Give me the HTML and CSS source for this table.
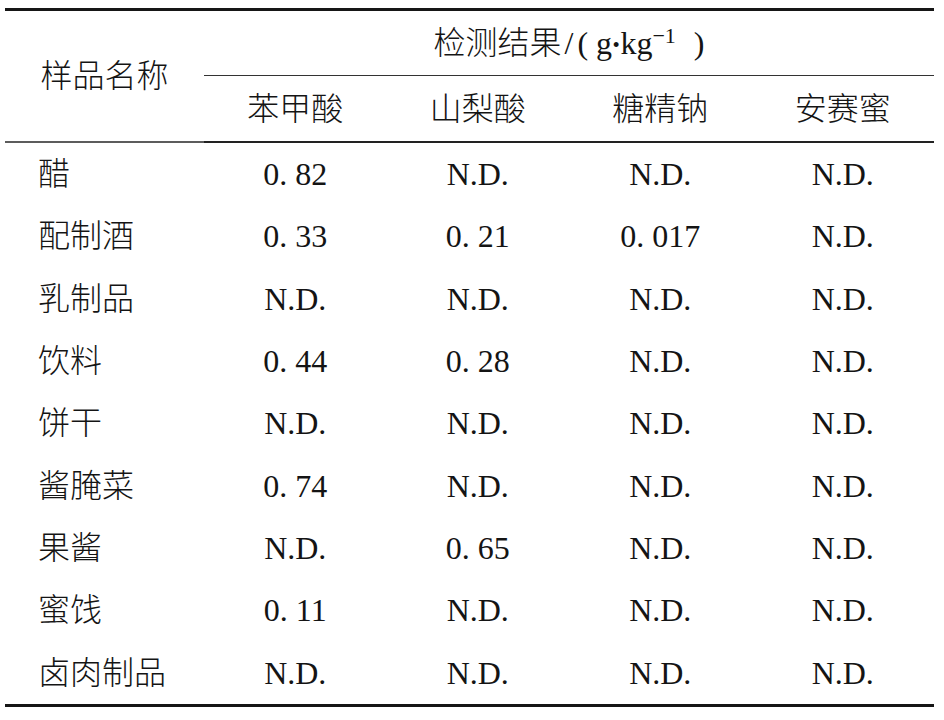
FILE: index.html
```html
<!DOCTYPE html>
<html lang="zh">
<head>
<meta charset="utf-8">
<link rel="stylesheet" href="styles.css">
</head>
<body>
<table class="result-table">
  <colgroup>
    <col class="col-name">
    <col class="col-val">
    <col class="col-val">
    <col class="col-val">
    <col class="col-val">
  </colgroup>
  <thead>
    <tr class="head-1">
      <th class="name-head" rowspan="2">样品名称</th>
      <th class="group-head" colspan="4">检测结果<span class="slash">/</span>( g<span class="dot">•</span>kg<sup class="exp">−1</sup><span class="rparen">)</span></th>
    </tr>
    <tr class="head-2">
      <th>苯甲酸</th>
      <th>山梨酸</th>
      <th>糖精钠</th>
      <th>安赛蜜</th>
    </tr>
  </thead>
  <tbody>
    <tr><td class="name">醋</td><td>0. 82</td><td>N.D.</td><td>N.D.</td><td>N.D.</td></tr>
    <tr><td class="name">配制酒</td><td>0. 33</td><td>0. 21</td><td>0. 017</td><td>N.D.</td></tr>
    <tr><td class="name">乳制品</td><td>N.D.</td><td>N.D.</td><td>N.D.</td><td>N.D.</td></tr>
    <tr><td class="name">饮料</td><td>0. 44</td><td>0. 28</td><td>N.D.</td><td>N.D.</td></tr>
    <tr><td class="name">饼干</td><td>N.D.</td><td>N.D.</td><td>N.D.</td><td>N.D.</td></tr>
    <tr><td class="name">酱腌菜</td><td>0. 74</td><td>N.D.</td><td>N.D.</td><td>N.D.</td></tr>
    <tr><td class="name">果酱</td><td>N.D.</td><td>0. 65</td><td>N.D.</td><td>N.D.</td></tr>
    <tr><td class="name">蜜饯</td><td>0. 11</td><td>N.D.</td><td>N.D.</td><td>N.D.</td></tr>
    <tr><td class="name">卤肉制品</td><td>N.D.</td><td>N.D.</td><td>N.D.</td><td>N.D.</td></tr>
  </tbody>
</table>
</body>
</html>
```

FILE: styles.css
```css
html, body {
  margin: 0;
  padding: 0;
  background: #ffffff;
}

body {
  padding: 8px 0 0 5px;
  color: #141414;
  font-family: "Liberation Serif", "Noto Sans CJK SC", serif;
  font-size: 32px;
}

.result-table {
  width: 929px;
  border-collapse: collapse;
  table-layout: fixed;
  border-top: 3px solid #161616;
  border-bottom: 3px solid #161616;
}

.col-name { width: 199px; }
.col-val { width: 182.5px; }

.result-table th,
.result-table td {
  padding: 0;
  font-weight: 300;
  text-align: center;
  vertical-align: middle;
  line-height: 1;
  white-space: nowrap;
}

.head-1 th { height: 64px; }
.head-2 th { height: 65px; }

.head-2 th {
  border-bottom: 2px solid #222222;
}

.name-head {
  border-bottom: 2px solid #5c5c5c;
}

.group-head {
  border-bottom: 1px solid #333333;
}

.slash {
  padding: 0 4px 0 3px;
}

.dot {
  font-family: "DejaVu Sans", sans-serif;
  font-size: 18px;
  padding: 0 1px;
  vertical-align: 3px;
}

.exp {
  font-size: 22px;
  vertical-align: 11px;
  line-height: 0;
}

.rparen {
  padding-left: 18px;
}

.name-head,
.result-table td.name {
  text-align: left;
  padding-left: 33px;
}

.result-table tbody td {
  height: 62.3px;
}
```
